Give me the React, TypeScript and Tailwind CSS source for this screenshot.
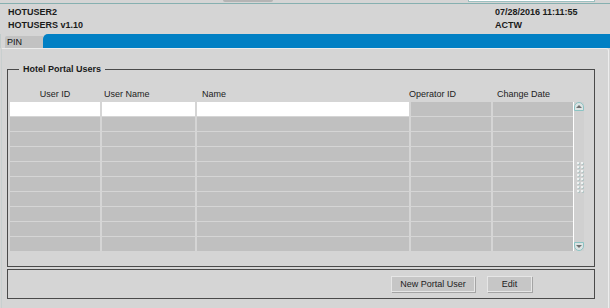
import React from "react";

const columns = [
  { label: "User ID", align: "justify-center", white: true },
  { label: "User Name", align: "justify-start pl-[2px]", white: true },
  { label: "Name", align: "justify-start pl-[5px]", white: true },
  { label: "Operator ID", align: "justify-start -ml-[2px]", white: false },
  { label: "Change Date", align: "justify-start pl-[4px]", white: false },
];

const rows = Array.from({ length: 10 }, (_, i) => i);

function Scrollbar() {
  return (
    <div className="flex h-[149px] w-[11px] flex-col border-l border-white bg-[#d0d0d0]">
      {/* Up arrow */}
      <div className="flex h-[9px] w-[10px] items-center justify-center rounded-t-[5px] border border-[#8cc4c4] bg-[#dde4e4]">
        <div className="h-0 w-0 border-x-[3px] border-b-[3px] border-x-transparent border-b-[#707070]" />
      </div>
      <div className="flex flex-1 flex-col items-center justify-center">
        {/* Grip */}
        <div className="flex flex-col gap-[2px]">
          {Array.from({ length: 8 }, (_, i) => (
            <div key={i} className="flex gap-[2px] pl-[1px]">
              <span className="h-[2px] w-[2px] bg-[#eef2f2] shadow-[1px_1px_0_#b4c6c6]" />
              <span className="h-[2px] w-[2px] bg-[#eef2f2] shadow-[1px_1px_0_#b4c6c6]" />
            </div>
          ))}
        </div>
      </div>
      {/* Down arrow */}
      <div className="flex h-[9px] w-[10px] items-center justify-center rounded-b-[5px] border border-[#8cc4c4] bg-[#dde4e4]">
        <div className="h-0 w-0 border-x-[3px] border-t-[3px] border-x-transparent border-t-[#707070]" />
      </div>
    </div>
  );
}

export default function App() {
  return (
    <div className="relative h-[308px] w-[610px] overflow-hidden bg-[#d5d5d5] font-['Liberation_Sans',Arial,sans-serif] text-[#1a1a1a]">
      {/* Cropped toolbar remnant */}
      <div className="flex h-[4px] border-b border-[#86b0b0]">
        <div className="ml-[223px] h-[2px] w-[50px] rounded-b-[2px] bg-[#b4b4b4]" />
        <div className="ml-[195px] h-[2px] w-[127px] border-x border-b border-[#9cc0c0] bg-white" />
      </div>

      {/* Header */}
      <div className="flex h-[30px] pt-[2px] text-[9px] font-bold leading-[13px]">
        <div className="flex-1 pl-[8px]">
          <div>HOTUSER2</div>
          <div>HOTUSERS v1.10</div>
        </div>
        <div className="w-[115px]">
          <div>07/28/2016 11:11:55</div>
          <div>ACTW</div>
        </div>
      </div>

      {/* Tab strip */}
      <div className="flex h-[14px] items-end">
        <div className="h-[14px] w-[5px] border-l border-[#c2cccc]" />
        <div className="flex h-[12px] w-[38px] items-center rounded-tl-[2px] bg-[#c2c2c2] pl-[2px] text-[9px] leading-none text-[#111]">
          PIN
        </div>
        <div className="h-[14px] flex-1 rounded-tl-[5px] bg-[#0180c4]" />
      </div>

      {/* Tab content */}
      <div className="ml-[1px] h-[260px] w-[608px] rounded-tr-[3px] border-x border-t border-l-[#c8cfcf] border-r-[#eeeeee] border-t-[#ececec]">
        {/* Hotel Portal Users group */}
        <div className="relative ml-[5px] mt-[20px] h-[198px] w-[588px] border border-[#4a4a4a]">
          <span className="absolute -top-[7px] left-[11px] bg-[#d5d5d5] px-[4px] text-[9px] font-bold leading-[12px]">
            Hotel Portal Users
          </span>
          <div className="flex pl-[2px] pt-[17px]">
            <div>
              <div className="grid grid-cols-[90px_93px_212px_80px_80px] gap-x-[2px]">
                {columns.map((c) => (
                  <div
                    key={c.label}
                    className={`flex h-[15px] items-center text-[9px] leading-none text-[#222] ${c.align}`}
                  >
                    {c.label}
                  </div>
                ))}
              </div>
              <div className="grid grid-cols-[90px_93px_212px_80px_80px] gap-x-[2px] gap-y-[1px]">
                {rows.map((r) =>
                  columns.map((c) => (
                    <div
                      key={`${r}-${c.label}`}
                      className={
                        r === 0 && c.white
                          ? "h-[14px] bg-white"
                          : "h-[14px] bg-[#c0c0c0]"
                      }
                    />
                  ))
                )}
              </div>
            </div>
            <div className="pt-[15px]">
              <Scrollbar />
            </div>
          </div>
        </div>

        {/* Action bar */}
        <div className="ml-[5px] mt-[2px] flex h-[30px] w-[588px] items-center justify-end gap-[12px] border border-[#4a4a4a] pr-[62px]">
          <button className="flex h-[16px] w-[84px] items-center justify-center border border-[#e6e6e6] bg-[#c6c6c6] text-[9px] leading-none text-[#222] shadow-[1px_1px_0_#a4a4a4]">
            New Portal User
          </button>
          <button className="flex h-[16px] w-[45px] items-center justify-center border border-[#e6e6e6] bg-[#c6c6c6] text-[9px] leading-none text-[#222] shadow-[1px_1px_0_#a4a4a4]">
            Edit
          </button>
        </div>
      </div>
    </div>
  );
}
